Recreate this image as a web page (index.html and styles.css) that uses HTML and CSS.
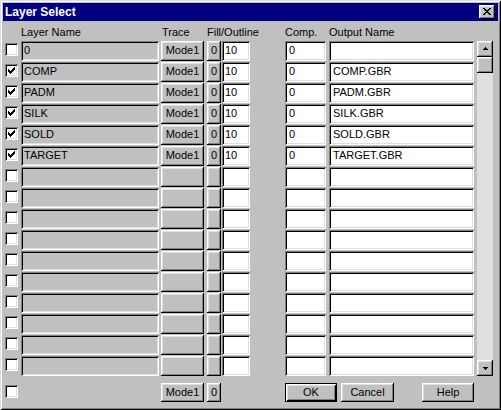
FILE: index.html
```html
<!DOCTYPE html>
<html>
<head>
<meta charset="utf-8">
<link rel="stylesheet" href="styles.css">
</head>
<body>
<div class="window">
  <div class="titlebar">
    <span class="title">Layer Select</span>
    <span class="closebtn raised"><svg width="16" height="14" viewBox="0 0 16 14" shape-rendering="crispEdges"><path d="M4 3h2v1h-2z M10 3h2v1h-2z M5 4h2v1h-2z M9 4h2v1h-2z M6 5h4v1h-4z M7 6h2v1h-2z M6 7h4v1h-4z M5 8h2v1h-2z M9 8h2v1h-2z M4 9h2v1h-2z M10 9h2v1h-2z" fill="#000"/></svg></span>
  </div>
  <div class="grid">
    <span class="hd"></span>
    <span class="hd">Layer Name</span>
    <span class="hd hd-trace">Trace</span>
    <span class="hd">Fill/Outline</span>
    <span class="hd"></span>
    <span class="hd">Comp.</span>
    <span class="hd">Output Name</span>
    <span class="hd"></span>

    <div class="scrollbar">
      <span class="sbtn raised"><svg width="16" height="16" viewBox="0 0 16 16" shape-rendering="crispEdges"><path d="M8 6h1v1h-1z M7 7h3v1h-3z M6 8h5v1h-5z" fill="#000"/></svg></span>
      <span class="sbtn raised"></span>
      <span class="track"></span>
      <span class="sbtn raised"><svg width="16" height="16" viewBox="0 0 16 16" shape-rendering="crispEdges"><path d="M6 7h5v1h-5z M7 8h3v1h-3z M8 9h1v1h-1z" fill="#000"/></svg></span>
    </div>

    <!-- row 1 -->
    <span class="cb sunken"></span>
    <span class="field name sunken">0</span>
    <span class="btn mode raised">Mode1</span>
    <span class="btn zero raised">0</span>
    <span class="field fill sunken white">10</span>
    <span class="field comp sunken white">0</span>
    <span class="field out sunken white"></span>

    <!-- row 2 -->
    <span class="cb sunken"><svg class="chk" width="13" height="13" viewBox="0 0 13 13" shape-rendering="crispEdges"><path d="M3 5h1v3h-1z M4 6h1v3h-1z M5 7h1v3h-1z M6 6h1v3h-1z M7 5h1v3h-1z M8 4h1v3h-1z M9 3h1v3h-1z" fill="#000"/></svg></span>
    <span class="field name sunken">COMP</span>
    <span class="btn mode raised">Mode1</span>
    <span class="btn zero raised">0</span>
    <span class="field fill sunken white">10</span>
    <span class="field comp sunken white">0</span>
    <span class="field out sunken white">COMP.GBR</span>

    <!-- row 3 -->
    <span class="cb sunken"><svg class="chk" width="13" height="13" viewBox="0 0 13 13" shape-rendering="crispEdges"><path d="M3 5h1v3h-1z M4 6h1v3h-1z M5 7h1v3h-1z M6 6h1v3h-1z M7 5h1v3h-1z M8 4h1v3h-1z M9 3h1v3h-1z" fill="#000"/></svg></span>
    <span class="field name sunken">PADM</span>
    <span class="btn mode raised">Mode1</span>
    <span class="btn zero raised">0</span>
    <span class="field fill sunken white">10</span>
    <span class="field comp sunken white">0</span>
    <span class="field out sunken white">PADM.GBR</span>

    <!-- row 4 -->
    <span class="cb sunken"><svg class="chk" width="13" height="13" viewBox="0 0 13 13" shape-rendering="crispEdges"><path d="M3 5h1v3h-1z M4 6h1v3h-1z M5 7h1v3h-1z M6 6h1v3h-1z M7 5h1v3h-1z M8 4h1v3h-1z M9 3h1v3h-1z" fill="#000"/></svg></span>
    <span class="field name sunken">SILK</span>
    <span class="btn mode raised">Mode1</span>
    <span class="btn zero raised">0</span>
    <span class="field fill sunken white">10</span>
    <span class="field comp sunken white">0</span>
    <span class="field out sunken white">SILK.GBR</span>

    <!-- row 5 -->
    <span class="cb sunken"><svg class="chk" width="13" height="13" viewBox="0 0 13 13" shape-rendering="crispEdges"><path d="M3 5h1v3h-1z M4 6h1v3h-1z M5 7h1v3h-1z M6 6h1v3h-1z M7 5h1v3h-1z M8 4h1v3h-1z M9 3h1v3h-1z" fill="#000"/></svg></span>
    <span class="field name sunken">SOLD</span>
    <span class="btn mode raised">Mode1</span>
    <span class="btn zero raised">0</span>
    <span class="field fill sunken white">10</span>
    <span class="field comp sunken white">0</span>
    <span class="field out sunken white">SOLD.GBR</span>

    <!-- row 6 -->
    <span class="cb sunken"><svg class="chk" width="13" height="13" viewBox="0 0 13 13" shape-rendering="crispEdges"><path d="M3 5h1v3h-1z M4 6h1v3h-1z M5 7h1v3h-1z M6 6h1v3h-1z M7 5h1v3h-1z M8 4h1v3h-1z M9 3h1v3h-1z" fill="#000"/></svg></span>
    <span class="field name sunken">TARGET</span>
    <span class="btn mode raised">Mode1</span>
    <span class="btn zero raised">0</span>
    <span class="field fill sunken white">10</span>
    <span class="field comp sunken white">0</span>
    <span class="field out sunken white">TARGET.GBR</span>

    <!-- rows 7-16 empty -->
    <span class="cb sunken"></span><span class="field name sunken"></span><span class="btn mode raised"></span><span class="btn zero raised"></span><span class="field fill sunken white"></span><span class="field comp sunken white"></span><span class="field out sunken white"></span>
    <span class="cb sunken"></span><span class="field name sunken"></span><span class="btn mode raised"></span><span class="btn zero raised"></span><span class="field fill sunken white"></span><span class="field comp sunken white"></span><span class="field out sunken white"></span>
    <span class="cb sunken"></span><span class="field name sunken"></span><span class="btn mode raised"></span><span class="btn zero raised"></span><span class="field fill sunken white"></span><span class="field comp sunken white"></span><span class="field out sunken white"></span>
    <span class="cb sunken"></span><span class="field name sunken"></span><span class="btn mode raised"></span><span class="btn zero raised"></span><span class="field fill sunken white"></span><span class="field comp sunken white"></span><span class="field out sunken white"></span>
    <span class="cb sunken"></span><span class="field name sunken"></span><span class="btn mode raised"></span><span class="btn zero raised"></span><span class="field fill sunken white"></span><span class="field comp sunken white"></span><span class="field out sunken white"></span>
    <span class="cb sunken"></span><span class="field name sunken"></span><span class="btn mode raised"></span><span class="btn zero raised"></span><span class="field fill sunken white"></span><span class="field comp sunken white"></span><span class="field out sunken white"></span>
    <span class="cb sunken"></span><span class="field name sunken"></span><span class="btn mode raised"></span><span class="btn zero raised"></span><span class="field fill sunken white"></span><span class="field comp sunken white"></span><span class="field out sunken white"></span>
    <span class="cb sunken"></span><span class="field name sunken"></span><span class="btn mode raised"></span><span class="btn zero raised"></span><span class="field fill sunken white"></span><span class="field comp sunken white"></span><span class="field out sunken white"></span>
    <span class="cb sunken"></span><span class="field name sunken"></span><span class="btn mode raised"></span><span class="btn zero raised"></span><span class="field fill sunken white"></span><span class="field comp sunken white"></span><span class="field out sunken white"></span>
    <span class="cb sunken"></span><span class="field name sunken"></span><span class="btn mode raised"></span><span class="btn zero raised"></span><span class="field fill sunken white"></span><span class="field comp sunken white"></span><span class="field out sunken white"></span>
  </div>

  <div class="bottom">
    <span class="cb sunken"></span>
    <span class="btn mode raised b-mode">Mode1</span>
    <span class="btn zero raised b-zero">0</span>
    <span class="btn default b-ok">OK</span>
    <span class="btn raised b-cancel">Cancel</span>
    <span class="btn raised b-help">Help</span>
  </div>
</div>
</body>
</html>
```

FILE: styles.css
```css
html, body {
  margin: 0;
  padding: 0;
  background: #c0c0c0;
}

body {
  font-family: "Liberation Sans", Arial, sans-serif;
  font-size: 11px;
  color: #000;
}

.window {
  width: 501px;
  height: 410px;
  box-sizing: border-box;
  padding: 3px;
  background: #c0c0c0;
  box-shadow: inset 1px 1px #dfdfdf, inset -1px -1px #000, inset 2px 2px #fff, inset -2px -2px #808080;
}

.titlebar {
  height: 18px;
  background: #000080;
  display: flex;
  align-items: flex-start;
  justify-content: space-between;
}

.title {
  color: #fff;
  font-weight: bold;
  font-size: 12px;
  line-height: 18px;
  padding-left: 2px;
}

.closebtn {
  width: 16px;
  height: 14px;
  margin-top: 2px;
  margin-right: 3px;
  display: block;
}

.closebtn svg, .sbtn svg {
  display: block;
}

.raised {
  background: #c0c0c0;
  box-shadow: inset -1px -1px #000, inset 1px 1px #fff, inset -2px -2px #808080, inset 2px 2px #dfdfdf;
}

.sunken {
  box-shadow: inset 1px 1px #808080, inset -1px -1px #fff, inset 2px 2px #000, inset -2px -2px #dfdfdf;
}

.white {
  background: #fff;
}

.grid {
  display: grid;
  grid-template-columns: 16px 140px 46px 15px 63px 44px 148px 16px;
  grid-template-rows: 19px repeat(16, 20px);
  row-gap: 1px;
  margin-left: 2px;
}

.hd {
  padding-top: 5px;
  line-height: 13px;
  white-space: nowrap;
}

.hd-trace {
  padding-left: 1px;
}

.scrollbar {
  grid-column: 8;
  grid-row: 2 / span 16;
  display: flex;
  flex-direction: column;
  background: #e0e0e0;
}

.sbtn {
  display: block;
  width: 16px;
  height: 16px;
  flex: none;
}

.track {
  flex: 1;
}

.cb {
  display: block;
  width: 13px;
  height: 13px;
  margin-top: 2px;
  background: #fff;
  position: relative;
}

.chk {
  display: block;
}

.field {
  display: block;
  height: 20px;
  box-sizing: border-box;
  padding-left: 3px;
  line-height: 19px;
  white-space: nowrap;
  overflow: hidden;
}

.name { width: 138px; background: #c0c0c0; }
.fill { width: 28px; }
.comp { width: 41px; padding-left: 4px; }
.out { width: 145px; padding-left: 4px; }

.btn {
  display: block;
  height: 20px;
  box-sizing: border-box;
  text-align: center;
  line-height: 19px;
  white-space: nowrap;
}

.mode { width: 43px; }
.zero { width: 14px; }

.bottom {
  display: flex;
  align-items: flex-start;
  margin-top: 7px;
  padding-left: 2px;
}

.bottom .cb {
  margin-top: 2px;
}

.b-mode { margin-left: 143px; height: 19px; line-height: 18px; }
.b-zero { margin-left: 3px; height: 19px; line-height: 18px; }

.default {
  background: #c0c0c0;
  box-shadow: inset 1px 1px #000, inset -1px -1px #000, inset 2px 2px #fff, inset -2px -2px #000, inset 3px 3px #dfdfdf, inset -3px -3px #808080;
}

.b-ok { margin-left: 64px; width: 52px; height: 19px; line-height: 18px; }
.b-cancel { margin-left: 4px; width: 53px; height: 19px; line-height: 18px; }
.b-help { margin-left: 28px; width: 52px; height: 19px; line-height: 18px; }
```
